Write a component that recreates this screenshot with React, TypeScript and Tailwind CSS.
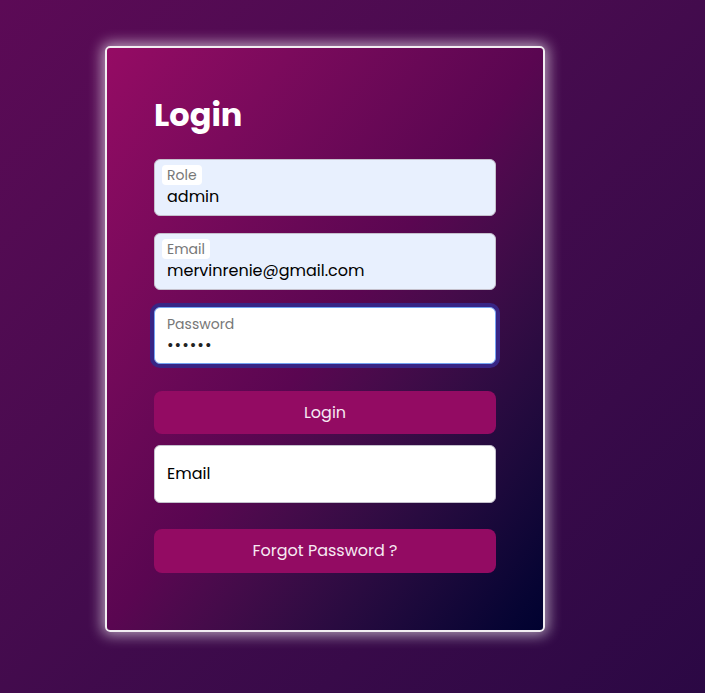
import React from "react"

const font = { fontFamily: "Poppins, Inter, 'Noto Sans', sans-serif" }

type FieldProps = {
  label: string
  value: React.ReactNode
  focused?: boolean
}

function Field({ label, value, focused }: FieldProps) {
  if (focused) {
    return (
      <div className="flex h-[57px] flex-col rounded-md border border-[#74a3f2] bg-white pl-[12px] pt-[6px] ring-4 ring-[#382585]">
        <span className="text-[14px] leading-[20px] text-[#777]">{label}</span>
        <span className="mt-px text-[16px] leading-[20px] tracking-[1px] text-[#222]">{value}</span>
      </div>
    )
  }
  return (
    <div className="flex h-[57px] flex-col rounded-md border border-[#c4c0cc] bg-[#e8f0fe] pl-[7px] pt-[5px]">
      <span className="self-start rounded-[4px] bg-white px-[5px] pt-px text-[14px] leading-[19px] text-[#777]">
        {label}
      </span>
      <span className="mt-[2px] pl-[5px] text-[16px] leading-[20px] text-black">{value}</span>
    </div>
  )
}

export default function App() {
  return (
    <div
      className="min-h-screen w-full bg-linear-to-br from-[#5c0a56] to-[#2b0844] pl-[105px] pt-[46px]"
      style={font}
    >
      <div className="h-[586px] w-[440px] rounded-[5px] border-2 border-[#f2eef2] bg-linear-to-br from-[#950b64] via-[#5a0651] to-[#010230] px-[47px] pt-[47px] shadow-[0_0_14px_3px_rgba(255,255,255,0.6)]">
        <h1 className="mb-[24px] text-[32px] leading-[40px] font-bold text-white">Login</h1>

        <div className="flex flex-col gap-[17px]">
          <Field label="Role" value="admin" />
          <Field label="Email" value="mervinrenie@gmail.com" />
          <Field label="Password" value="••••••" focused />
        </div>

        <button className="mt-[27px] h-[43px] w-full rounded-lg bg-[#930b63] text-[16px] text-[#f6e9f2]">
          Login
        </button>

        <div className="mt-[11px] flex h-[58px] items-center rounded-md border border-[#c4c0cc] bg-white pl-[12px] text-[16px] text-black">
          Email
        </div>

        <button className="mt-[26px] h-[44px] w-full rounded-lg bg-[#930b63] text-[16px] text-[#f6e9f2]">
          Forgot Password ?
        </button>
      </div>
    </div>
  )
}
